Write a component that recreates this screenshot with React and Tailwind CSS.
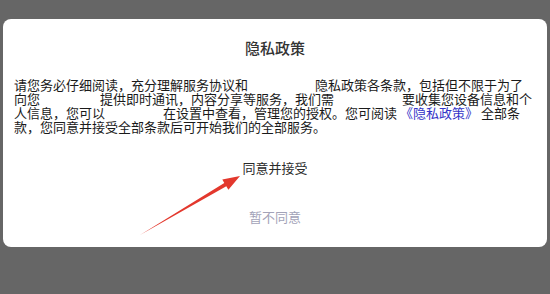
export default function App() {
  const font = { fontFamily: '"Noto Sans CJK SC", "Noto Sans", sans-serif' };
  return (
    <div className="relative w-[550px] h-[294px] bg-[#666666] overflow-hidden pt-[19px]" style={font}>
      <div className="mx-[3px] h-[228px] rounded-[8px] bg-white flex flex-col">
        <div className="pt-[21px] text-center text-[15px] leading-[16px] font-medium text-[#333333]">隐私政策</div>
        <div className="mt-[22px] px-[11px] text-[13px] leading-[14px] text-[#1a1a1a] whitespace-nowrap">
          <div>请您务必仔细阅读，充分理解服务协议和<span className="inline-block w-[67px]"></span>隐私政策各条款，包括但不限于为了</div>
          <div>向您<span className="inline-block w-[60px]"></span>提供即时通讯，内容分享等服务，我们需<span className="inline-block w-[68px]"></span>要收集您设备信息和个</div>
          <div>人信息，您可以<span className="inline-block w-[58px]"></span>在设置中查看，管理您的授权。您可阅读<span className="inline-block w-[3px]"></span><span className="text-[#3434c8]">《隐私政策》</span><span className="inline-block w-[3px]"></span>全部条</div>
          <div>款，您同意并接受全部条款后可开始我们的全部服务。</div>
        </div>
        <div className="mt-[27px] text-center text-[13px] leading-[14px] text-[#2a2a2a]">同意并接受</div>
        <div className="mt-[35px] text-center text-[13px] leading-[14px] text-[#a3a3b8]">暂不同意</div>
      </div>
      <svg className="absolute left-0 top-0" width="550" height="294" viewBox="0 0 550 294">
        <polygon
          points="140,235 224.3,182.9 222.3,179.4 240,176 228.4,189.8 226.3,186.3"
          fill="#e3382d"
        />
      </svg>
    </div>
  );
}
